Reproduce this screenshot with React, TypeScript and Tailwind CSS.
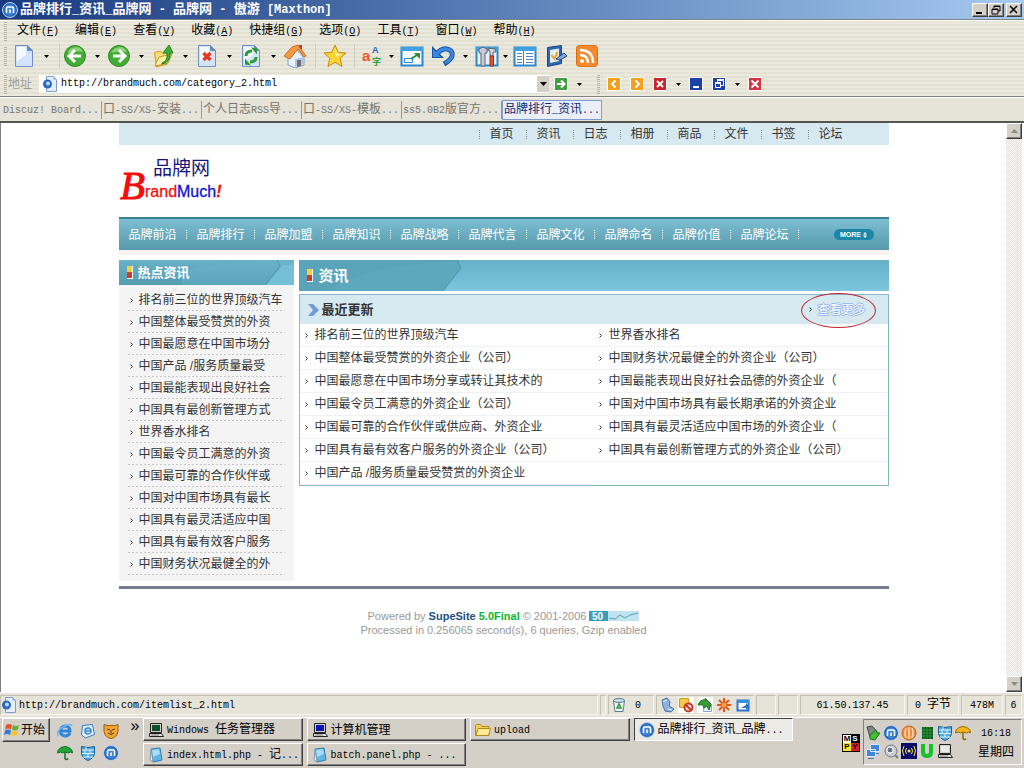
import type { ReactNode } from 'react';

const RAISED =
  'border border-t-white border-l-white border-r-[#404040] border-b-[#404040] bg-[#d4d0c8] shadow-[inset_-1px_-1px_0_#808080]';
const STRIPES = 'bg-[repeating-linear-gradient(0deg,#eae9dc_0_2px,#e3e1d3_2px_4px)]';
const DOTTED_BOTTOM =
  'bg-[linear-gradient(to_right,#9a9a9a_1px,transparent_1px)] bg-[length:4px_1px] bg-bottom bg-repeat-x';

const menus = [
  ['文件', 'F'],
  ['编辑', 'E'],
  ['查看', 'V'],
  ['收藏', 'A'],
  ['快捷组', 'G'],
  ['选项', 'O'],
  ['工具', 'T'],
  ['窗口', 'W'],
  ['帮助', 'H'],
];

const tabs = ['Discuz! Board...', '口-SS/XS-安装...', '个人日志RSS导...', '口-SS/XS-模板...', 'ss5.0B2版官方...'];

const topLinks = ['首页', '资讯', '日志', '相册', '商品', '文件', '书签', '论坛'];

const mainLinks = [
  '品牌前沿',
  '品牌排行',
  '品牌加盟',
  '品牌知识',
  '品牌战略',
  '品牌代言',
  '品牌文化',
  '品牌命名',
  '品牌价值',
  '品牌论坛',
];

const hotNews = [
  '排名前三位的世界顶级汽车',
  '中国整体最受赞赏的外资',
  '中国最愿意在中国市场分',
  '中国产品 /服务质量最受',
  '中国最能表现出良好社会',
  '中国具有最创新管理方式',
  '世界香水排名',
  '中国最令员工满意的外资',
  '中国最可靠的合作伙伴或',
  '中国对中国市场具有最长',
  '中国具有最灵活适应中国',
  '中国具有最有效客户服务',
  '中国财务状况最健全的外',
];

const latestNews = [
  '排名前三位的世界顶级汽车',
  '世界香水排名',
  '中国整体最受赞赏的外资企业（公司）',
  '中国财务状况最健全的外资企业（公司）',
  '中国最愿意在中国市场分享或转让其技术的',
  '中国最能表现出良好社会品德的外资企业（',
  '中国最令员工满意的外资企业（公司）',
  '中国对中国市场具有最长期承诺的外资企业',
  '中国最可靠的合作伙伴或供应商、外资企业',
  '中国具有最灵活适应中国市场的外资企业（',
  '中国具有最有效客户服务的外资企业（公司）',
  '中国具有最创新管理方式的外资企业（公司）',
  '中国产品 /服务质量最受赞赏的外资企业',
];

// Sets the Latin runs in a half-width face, so that two letters fill one Chinese character.
function Sys({ text, latin = 'text-[10px]' }: { text: string; latin?: string }) {
  return (
    <span className="whitespace-pre">
      {text.split(/([\x20-\x7e]+)/).map((part, i) =>
        i % 2 ? (
          <span key={i} className={`font-['Liberation_Mono',monospace] ${latin}`}>
            {part}
          </span>
        ) : (
          part
        ),
      )}
    </span>
  );
}

function Svg({ size, box = size, children }: { size: number; box?: number; children: ReactNode }) {
  return (
    <svg width={size} height={size} viewBox={`0 0 ${box} ${box}`} className="shrink-0" aria-hidden="true">
      {children}
    </svg>
  );
}

function Caret({ narrow = false }: { narrow?: boolean }) {
  return (
    <button className={`flex justify-center ${narrow ? 'w-3' : 'w-5'}`} aria-label="展开">
      <svg width="5" height="3" viewBox="0 0 5 3">
        <path d="M0 0h5L2.5 3z" fill="#000" />
      </svg>
    </button>
  );
}

function Grip() {
  return (
    <span className="h-5 w-[3px] shrink-0 bg-[repeating-linear-gradient(0deg,#b5b3a6_0_1px,transparent_1px_2px)]" />
  );
}

function ToolButton({ label, className = '', children }: { label: string; className?: string; children: ReactNode }) {
  return (
    <button aria-label={label} className={`flex w-6 shrink-0 justify-center ${className}`}>
      <Svg size={24}>{children}</Svg>
    </button>
  );
}

function Divider({ className }: { className: string }) {
  return (
    <span className={`flex justify-center ${className}`}>
      <span className="h-6 w-px bg-[#cfcdbf]" />
    </span>
  );
}

function Sheet() {
  return (
    <>
      <path d="M3.500 1.500h12l5 5v16h-17z" fill="#d3e3fa" stroke="#6f8fc4" />
      <path d="M5 3h9v8l-9 6z" fill="#f4f8ff" />
      <path d="M15.500 1.500v5h5z" fill="#5f86c9" stroke="#6f8fc4" />
    </>
  );
}

function MaxthonIcon({ size = 16 }: { size?: number }) {
  return (
    <Svg size={size} box={16}>
      <circle cx="8" cy="8" r="7.500" fill="#2c66b8" stroke="#b9d3f2" />
      <circle cx="8" cy="8" r="5.500" fill="#3f83d4" />
      <path d="M4.500 11V6.500q0-1.500 1.500-1.500h4q1.500 0 1.500 1.500V11M8 7.500V11" fill="none" stroke="#fff" strokeWidth="1.500" />
    </Svg>
  );
}

function PageIcon() {
  return (
    <Svg size={16}>
      <path d="M4.500.5h7l3 3v12h-10z" fill="#e4eefc" stroke="#7d9cd0" />
      <path d="M11.500.5v3h3z" fill="#86a7dd" />
      <circle cx="5.500" cy="8" r="4.500" fill="#2e6bbd" />
      <circle cx="6" cy="7.500" r="2" fill="#bcd9f7" />
    </Svg>
  );
}

function Shield({ size = 16 }: { size?: number }) {
  return (
    <Svg size={size} box={16}>
      <path d="M1.500 1.500q6.500 2 13 0v7q-1 5-6.500 7-5.500-2-6.500-7z" fill="#52a9dc" stroke="#175e96" />
      <path d="M2 5h12M2 8.500h12M3 12h10M6 2v3M10 5v3.500M5 5v3.500M8 8.500V12" stroke="#dff2ff" />
    </Svg>
  );
}

function Umbrella({ fill, stroke }: { fill: string; stroke: string }) {
  return (
    <Svg size={16}>
      <path d="M.5 8q0-5.500 7.500-6.500Q15.500 2.500 15.500 8l-2-1-2 1L8 7 5.500 8l-2-1z" fill={fill} stroke={stroke} />
      <path d="M8 7v6.500q1.500 2 3 0" fill="none" stroke={stroke} strokeWidth="1.500" />
    </Svg>
  );
}

function Computer({ screen = '#0b16b8' }: { screen?: string }) {
  return (
    <Svg size={16}>
      <path d="M2.500 1.500h11v9h-11z" fill="#d4d0c8" stroke="#222" />
      <path d="M4 3h8v6H4z" fill={screen} />
      <path d="M1.500 11.500h12l2 3h-14z" fill="#e8e5dd" stroke="#222" />
      <path d="M3 13h8" stroke="#777" />
    </Svg>
  );
}

function Notepad() {
  return (
    <Svg size={16}>
      <path d="M3 2l9-1 2 12-9 2z" fill="#5db5e8" stroke="#2b7fb8" />
      <path d="M4 3l7-1 1 5-7 3z" fill="#a6dcf7" />
      <path d="M3 2l2 13-3-2z" fill="#e7f4fb" stroke="#89a" />
    </Svg>
  );
}

function Toolbar() {
  return (
    <div className="flex h-8 items-center pl-1">
      <Grip />
      <ToolButton label="新建" className="ml-[5px]">
        <Sheet />
      </ToolButton>
      <Caret />
      <Divider className="w-[7px]" />
      <ToolButton label="后退">
        <circle cx="12" cy="12" r="10.500" fill="#43ac35" stroke="#2b8a25" />
        <path d="M4 9q3-6 9-6 5 0 7 5-7-2-16 1z" fill="#8ad276" />
        <path d="M12 6l-6 6 6 6M6.500 12H18" fill="none" stroke="#fff" strokeWidth="3" />
      </ToolButton>
      <Caret />
      <ToolButton label="前进">
        <circle cx="12" cy="12" r="10.500" fill="#43ac35" stroke="#2b8a25" />
        <path d="M4 9q3-6 9-6 5 0 7 5-7-2-16 1z" fill="#8ad276" />
        <path d="M12 6l6 6-6 6M17.500 12H6" fill="none" stroke="#fff" strokeWidth="3" />
      </ToolButton>
      <Caret />
      <ToolButton label="向上">
        <path d="M3.500 8.500l6-1.500 2 2 8-1-3 12-11 3z" fill="#f8dd78" stroke="#c79a2a" />
        <path d="M4 22l4-9 13-3-4 9z" fill="#fff0a8" stroke="#c79a2a" />
        <path d="M11 19q6-2 5-10h-4l6-8 4 8h-3q1 9-8 11z" fill="#3fae35" stroke="#23801f" />
      </ToolButton>
      <Caret />
      <ToolButton label="停止">
        <Sheet />
        <path d="M8.500 9l7 7M15.500 9l-7 7" stroke="#e33a22" strokeWidth="3.500" />
      </ToolButton>
      <Caret />
      <ToolButton label="刷新">
        <Sheet />
        <path d="M7 12q0-5 6-5" fill="none" stroke="#2d9a34" strokeWidth="3" />
        <path d="M12 3.500l6 1v6z" fill="#2d9a34" />
        <path d="M17 13q0 5-6 5" fill="none" stroke="#2d9a34" strokeWidth="3" />
        <path d="M12 21.500l-6-1v-6z" fill="#2d9a34" />
      </ToolButton>
      <Caret />
      <ToolButton label="主页">
        <path d="M5 11l9-5 7 8v7l-9 3-7-3z" fill="#e9f1fc" stroke="#7c9fd0" />
        <path d="M12 15v8l9-3v-7z" fill="#a9c8ee" />
        <path d="M1 12L9 3l6-2 8 11-2 1-6-8-8 10z" fill="#f39a45" stroke="#cc6f22" />
        <path d="M16 1h3v5l-3-3z" fill="#d23b25" />
        <path d="M14 16h4v6l-4 1z" fill="#7a6a68" />
      </ToolButton>
      <Divider className="w-4" />
      <ToolButton label="收藏">
        <path
          d="M12 1l3.300 7.300 7.700.7-5.800 5.200 1.800 8.300-7-4.300-7 4.300 1.800-8.300L1 9l7.700-.7z"
          fill="#fbd335"
          stroke="#c48d14"
        />
        <path d="M12 4l2 5.500 5 .5-6 3z" fill="#fff3a0" />
      </ToolButton>
      <Divider className="w-[14px]" />
      <ToolButton label="翻译">
        <text x="1" y="17" fontSize="15" fontWeight="700" fill="#e8562a" fontFamily="Liberation Sans">
          a
        </text>
        <text x="11" y="9" fontSize="9" fontWeight="700" fill="#2465c4" fontFamily="Liberation Sans">
          A
        </text>
        <text x="11" y="21" fontSize="9" fontWeight="700" fill="#2d9a34" fontFamily="Noto Sans CJK SC">
          字
        </text>
      </ToolButton>
      <Caret narrow />
      <ToolButton label="新窗口" className="ml-[3px]">
        <path d="M1.500 3.500h21v18h-21z" fill="#f4faff" stroke="#2b87cf" strokeWidth="2" />
        <path d="M1 3h22v4H1z" fill="#3fa0e4" />
        <path d="M4.500 14.500h8v4h-8z" fill="#fff" stroke="#2b87cf" />
        <path d="M11 15l6-4" stroke="#2d8a34" strokeWidth="2" />
        <path d="M14 9h6v6z" fill="#2d8a34" />
      </ToolButton>
      <ToolButton label="撤销" className="ml-[7px]">
        <path d="M5 11q5-7 11-6 6 1 5 7-1 4-8 8" fill="none" stroke="#1c55a8" strokeWidth="5" />
        <path d="M1 2v12h12z" fill="#1c55a8" />
        <path d="M5 11q5-7 11-6 6 1 5 7-1 4-7 7" fill="none" stroke="#3a8ae0" strokeWidth="3" />
        <path d="M2 5v8h8z" fill="#3a8ae0" />
      </ToolButton>
      <Caret />
      <ToolButton label="工具">
        <path d="M1.500 3.500h21v18h-21z" fill="#e6f2fd" stroke="#2b87cf" strokeWidth="2" />
        <path d="M1 3h22v4H1z" fill="#3fa0e4" />
        <path d="M4 5l4-2 4 2v4h-2v13H6V9H4z" fill="#c9cdd4" stroke="#5a6470" />
        <path d="M13 4l7 1 1 3h-3v4h-3V8z" fill="#d6dae0" stroke="#5a6470" />
        <path d="M15 12h3.500v10H15z" fill="#e0532b" stroke="#a03010" />
      </ToolButton>
      <Caret narrow />
      <ToolButton label="侧边栏" className="ml-[2px]">
        <path d="M1.500 3.500h21v18h-21z" fill="#fff" stroke="#2b87cf" strokeWidth="2" />
        <path d="M1 3h22v4H1z" fill="#3fa0e4" />
        <path d="M10.500 7v14" stroke="#2b87cf" />
        <path d="M4 9.500h5M4 12.500h5M4 15.500h5M4 18.500h5M13 9.500h7M13 12.500h7M13 15.500h7M13 18.500h7" stroke="#4f82c4" />
      </ToolButton>
      <ToolButton label="表单" className="ml-[7px]">
        <path d="M3.500 3.500l14-2v18l-14 3z" fill="#2e67b4" stroke="#1b4583" />
        <path d="M6 6l9-1.500V17L6 19z" fill="#e5effb" />
        <path d="M7.500 11l3 4 3-7" fill="none" stroke="#f0a030" strokeWidth="2" />
        <path d="M12 15l8-6 3 3-7 4z" fill="#86a9dc" stroke="#1b4583" />
      </ToolButton>
      <ToolButton label="RSS" className="ml-[7px]">
        <rect x="1.500" y="1.500" width="21" height="21" rx="3" fill="#f58a2c" stroke="#dc6e12" />
        <circle cx="7" cy="17" r="2" fill="#fff" />
        <path d="M5 11q8 0 8 8M5 6q13 0 13 13" fill="none" stroke="#fff" strokeWidth="2.500" />
      </ToolButton>
    </div>
  );
}

function SmallButton({
  label,
  color,
  d,
  thin = false,
  className = '',
}: {
  label: string;
  color: string;
  d: string;
  thin?: boolean;
  className?: string;
}) {
  return (
    <button aria-label={label} className={className}>
      <Svg size={16}>
        <rect x="1.500" y="1.500" width="13" height="13" fill={color} stroke="#fff" />
        <path d={d} fill="none" stroke="#fff" strokeWidth={thin ? 1 : 2} />
      </Svg>
    </button>
  );
}

function AddressBar() {
  return (
    <div className="flex h-6 items-center pl-1">
      <Grip />
      <label htmlFor="address" className="ml-px text-[#a09e94]">
        地址
      </label>
      <div className="ml-[7px] flex h-[18px] w-1/2 items-center bg-white pl-[3px]">
        <PageIcon />
        <input
          id="address"
          defaultValue="http://brandmuch.com/category_2.html"
          className="ml-[3px] min-w-0 flex-1 bg-transparent font-['Liberation_Mono',monospace] text-[10px] outline-none"
        />
        <button aria-label="历史" className="flex h-4 w-3 items-center justify-center bg-[#d4d0c8]">
          <svg width="7" height="4" viewBox="0 0 7 4">
            <path d="M0 0h7L3.500 4z" />
          </svg>
        </button>
      </div>
      <SmallButton label="转到" color="#3f9e41" d="M4 8h7M8 4.500L11.500 8 8 11.500" className="ml-1" />
      <Caret />
      <span className="w-2" />
      <Grip />
      <SmallButton label="上一个" color="#f3a01c" d="M9.500 4.500L6 8l3.500 3.500" className="ml-[6px]" />
      <SmallButton label="下一个" color="#f3a01c" d="M6.500 4.500L10 8l-3.500 3.500" className="ml-[7px]" />
      <SmallButton label="关闭标签" color="#c8242c" d="M5 5l6 6M11 5l-6 6" className="ml-[7px]" />
      <Caret />
      <SmallButton label="最小化标签" color="#1d3fa8" d="M5 11h6" />
      <SmallButton
        label="还原标签"
        color="#1d3fa8"
        d="M6.500 7V4.500h6v5H10M6 3.500h7M4.500 7.500h5v4h-5zM4 6.500h6"
        thin
        className="ml-[7px]"
      />
      <Caret />
      <SmallButton label="关闭" color="#d8303c" d="M4.500 4.500l7 7M11.500 4.500l-7 7" />
    </div>
  );
}

function Bullet() {
  return (
    <svg width="4" height="5" viewBox="0 0 4 5" className="shrink-0">
      <path d="M.5.5l2 2-2 2" fill="none" stroke="#333" />
    </svg>
  );
}

function Flag() {
  return (
    <span className="h-[13px] w-[6px] border-r border-b border-white bg-linear-to-b from-[#f7d13a] from-45% to-[#d9342b] to-55%" />
  );
}

function Logo() {
  return (
    <svg width="112" height="60" viewBox="0 0 112 60" role="img" aria-label="品牌网 BrandMuch!">
      <text
        x="1"
        y="48"
        fontSize="41"
        fontStyle="italic"
        fontFamily="Liberation Serif"
        fill="#f30d0d"
        stroke="#f30d0d"
        strokeWidth="1"
      >
        B
      </text>
      <text x="34" y="24" fontSize="19" fontFamily="Noto Sans CJK SC" fill="#15157a">
        品牌网
      </text>
      <text x="26" y="46" fontSize="16" fontFamily="Liberation Sans" fill="#f30d0d" stroke="#f30d0d" strokeWidth="0.300">
        rand
        <tspan fill="#1010d8" stroke="#1010d8">
          Much
        </tspan>
        <tspan fontStyle="italic" fontWeight="700">
          !
        </tspan>
      </text>
    </svg>
  );
}

function WebPage() {
  return (
    <div className="mx-auto w-full max-w-[770px] text-[#333]">
      <nav className="flex h-[22px] items-center justify-end bg-[#d6e9f0] pr-[34px]">
        {topLinks.map((name) => (
          <span key={name} className="flex w-[47px] items-center">
            <span className="mr-[10px] h-[9px] border-l border-dotted border-[#7d93a0]" />
            <a href="#">{name}</a>
          </span>
        ))}
      </nav>

      <div className="flex h-[72px] items-center">
        <Logo />
      </div>

      <nav className="flex h-[33px] items-center border-t-2 border-[#3a8294] bg-linear-to-b from-[#7dbed3] to-[#579aab] pl-[10px] text-white">
        {mainLinks.map((name) => (
          <span key={name} className="flex w-[68px] items-center">
            <a href="#">{name}</a>
            <span className="ml-[9px] h-[9px] border-l border-dotted border-white" />
          </span>
        ))}
        <button className="mr-[15px] ml-auto flex h-[11px] w-10 items-center justify-center gap-[2px] rounded-full bg-[#1d86a7] font-['Liberation_Sans',sans-serif] text-[7px] leading-none font-bold">
          MORE
          <svg width="4" height="6" viewBox="0 0 4 6">
            <path d="M0 2.500h4L2 0zM0 3.500h4L2 6z" fill="#fff" />
          </svg>
        </button>
      </nav>
      <div className="mb-[5px] h-[5px] bg-[#f6f2ef]" />

      <div className="flex items-start gap-[5px]">
        <aside className="w-[175px] shrink-0 bg-[#f4f4f4]">
          <h2 className="relative flex h-[25px] items-center overflow-hidden bg-linear-to-b from-[#69b0c8] to-[#569db2] pl-2 text-[13px] font-bold text-white">
            <svg className="absolute inset-y-0 right-0" width="112" height="25" viewBox="0 0 112 25">
              <path d="M0 12Q30 2 90 0h22v25H0z" fill="#6db8d0" opacity=".3" />
              <path d="M84 25l14-17v-8h14v25z" fill="#69b4cb" />
              <path d="M84 25l17-20 11 0v20z" fill="#7cc4db" opacity=".7" />
              <path d="M95 0l3 6-14 18" fill="none" stroke="#5699ad" />
            </svg>
            <Flag />
            <span className="relative ml-[5px]">热点资讯</span>
          </h2>
          <ul className="px-[9px] pt-1 pb-1.5">
            {hotNews.map((title) => (
              <li key={title} className={`flex h-[22px] items-center pl-[2px] ${DOTTED_BOTTOM}`}>
                <Bullet />
                <a href="#" className="ml-[5px] whitespace-nowrap">
                  {title}
                </a>
              </li>
            ))}
          </ul>
        </aside>

        <main className="min-w-0 flex-1">
          <h1 className="relative flex h-[31px] items-center bg-linear-to-b from-[#66b0ca] to-[#7cc5dd] pl-2 text-[15px] font-bold text-white">
            <svg className="absolute inset-y-0 left-0" width="163" height="31" viewBox="0 0 163 31">
              <path d="M0 0h158l4 8-18 23H0z" fill="#5ea8be" />
              <path d="M30 31Q60 6 158 1v-1H0v31z" fill="#549bb0" opacity=".3" />
              <path d="M158 0l4 8-18 23" fill="none" stroke="#5193a6" />
            </svg>
            <span className="relative flex items-center gap-[6px]">
              <Flag />
              资讯
            </span>
          </h1>

          <section className="mt-[3px] border border-[#86b7c6]">
            <div className="relative flex h-[29px] items-center bg-[#d6e9f0] pl-2">
              <svg width="11" height="12" viewBox="0 0 11 12">
                <path d="M0 0h5l6 6-6 6H0l5-6z" fill="#6f9bdc" />
              </svg>
              <h2 className="ml-[3px] text-[13px] font-bold">最近更新</h2>
              <a
                href="#"
                className="mr-[22px] ml-auto flex items-center gap-1 text-white [text-shadow:1px_0_#92b4ea,-1px_0_#92b4ea,0_1px_#92b4ea,0_-1px_#92b4ea]"
              >
                <Bullet />
                查看更多
              </a>
              <span className="absolute -top-[2px] right-3 h-[35px] w-[75px] rounded-[50%] border border-[#c22736]" />
            </div>
            <ul className="grid grid-cols-2">
              {latestNews.map((title) => (
                <li key={title} className="flex h-[23px] items-center border-b border-[#f1f1f1] pl-[5px]">
                  <Bullet />
                  <a href="#" className="ml-[6px] whitespace-nowrap">
                    {title}
                  </a>
                </li>
              ))}
            </ul>
          </section>
        </main>
      </div>

      <footer className="mt-[5px] border-t-[3px] border-[#767a8c] pt-5 text-center font-['Liberation_Sans',sans-serif] text-[11px] leading-[14px] text-[#999]">
        <p className="flex items-center justify-center gap-[3px]">
          Powered by
          <a href="#" className="font-bold text-[#23507f]">
            SupeSite <span className="text-[#0cb82e]">5.0Final</span>
          </a>
          © 2001-2006
          <svg width="50" height="10" viewBox="0 0 50 10">
            <path d="M0 0h50v10H0z" fill="#bfe3ef" />
            <path d="M0 0h19v10H0z" fill="#3c9dbb" />
            <text x="3" y="9" fontSize="10" fontWeight="700" fill="#fff">
              50
            </text>
            <path d="M20 7l6 1 5-4 5 3 5-3 8-2" fill="none" stroke="#5aa0b8" />
          </svg>
        </p>
        <p>Processed in 0.256065 second(s), 6 queries, Gzip enabled</p>
      </footer>
    </div>
  );
}

function ScrollArrow({ d, label }: { d: string; label: string }) {
  return (
    <button aria-label={label} className={`flex h-4 w-4 items-center justify-center ${RAISED}`}>
      <svg width="7" height="4" viewBox="0 0 7 4">
        <path d={d} fill="#8a8a86" />
      </svg>
    </button>
  );
}

function Panel({ className, children }: { className: string; children?: ReactNode }) {
  return (
    <div
      className={`flex h-5 shrink-0 items-center border border-t-[#c3c0b3] border-r-[#f6f5ee] border-b-[#f6f5ee] border-l-[#c3c0b3] ${className}`}
    >
      {children}
    </div>
  );
}

function StatusBar() {
  return (
    <div className="flex h-[25px] items-center gap-[2px] border-t border-white bg-[#e6e3d8] pr-[2px]">
      <Panel className="min-w-0 flex-1 gap-[2px]">
        <PageIcon />
        <Sys text="http://brandmuch.com/itemlist_2.html" />
      </Panel>
      <Panel className="w-[6px]" />
      <Panel className="w-[46px] pl-[2px]">
        <Svg size={16}>
          <path d="M2.500 3.500h11l-1.500 11H4z" fill="#eef4f8" stroke="#5d7a90" />
          <ellipse cx="8" cy="3.500" rx="5.500" ry="2" fill="#c9dbe8" stroke="#5d7a90" />
          <path d="M6 11l2-4 2 4z" fill="none" stroke="#2d9a34" strokeWidth="1.500" />
        </Svg>
        <span className="ml-2">
          <Sys text="0" />
        </span>
      </Panel>
      <Panel className="w-[98px] gap-[3px] pl-[2px]">
        <Svg size={16}>
          <path d="M3 3l5-2 3 4-1 4 5 3-3 3-6-1-2-5z" fill="#8bb3e0" stroke="#4a70a8" />
          <path d="M4 5l4-2M9 12l4 1" stroke="#e9f3ff" />
        </Svg>
        <Svg size={16}>
          <path d="M0 0h16v16H0z" fill="#fff" />
          <path d="M1.500 1.500h9v9h-9z" fill="#f9c944" stroke="#d99a1c" />
          <circle cx="10.500" cy="10.500" r="4" fill="#fbe3dc" stroke="#c5352a" strokeWidth="2" />
          <path d="M8 8l5 5" stroke="#c5352a" strokeWidth="2" />
        </Svg>
        <Svg size={16}>
          <path d="M0 0h16v16H0z" fill="#fff" />
          <path d="M6.500 7.500h8v7h-8z" fill="#e4eefc" stroke="#8da6cc" />
          <path d="M1 8q2-6 8-5l-1-2 6 6-2 6-2-4-3 2q0-4-6-3z" fill="#3a9a38" stroke="#1d6e1f" />
        </Svg>
        <Svg size={16}>
          <path d="M8 1v14M1 8h14M3 3l10 10M13 3L3 13" stroke="#e2571c" strokeWidth="2" />
          <circle cx="8" cy="8" r="3" fill="#f9a33c" stroke="#e2571c" />
        </Svg>
        <Svg size={16}>
          <path d="M2.500 3.500h11v10h-11z" fill="#fff" stroke="#2b75c4" strokeWidth="2" />
          <path d="M2 3h12v3H2z" fill="#3a8fdc" />
          <path d="M6 11l5-3V6l4 4-4 3v-2z" fill="#2b75c4" />
        </Svg>
      </Panel>
      <Panel className="w-5" />
      <Panel className="w-5" />
      <Panel className="w-[105px] justify-center">
        <Sys text="61.50.137.45" />
      </Panel>
      <Panel className="w-[52px] justify-center">
        <Sys text="0 字节" />
      </Panel>
      <Panel className="w-[42px] justify-center">
        <Sys text="478M" />
      </Panel>
      <Panel className="w-[17px] justify-center">
        <Sys text="6" />
      </Panel>
    </div>
  );
}

function Task({ title, icon }: { title: string; icon: ReactNode }) {
  return (
    <button className={`flex h-[23px] min-w-0 items-center gap-[3px] pl-1 ${RAISED}`}>
      {icon}
      <Sys text={title} />
    </button>
  );
}

function Taskbar() {
  return (
    <div className="flex h-[51px] border-t border-white bg-[#d4d0c8] pr-[2px] pl-[2px]">
      <button className={`flex h-6 w-12 shrink-0 items-center gap-px pl-px ${RAISED}`}>
        <Svg size={16}>
          <path d="M2 3q3-2 6 0L7 7.500q-3-2-6 0z" fill="#e5532a" />
          <path d="M9 3q3 2 6 0l-1 4.500q-3 2-6 0z" fill="#5cb531" />
          <path d="M1 8.500q3-2 6 0L6 13q-3-2-6 0z" fill="#3a78d8" />
          <path d="M8 8.500q3 2 6 0L13 13q-3 2-6 0z" fill="#f8c52c" />
        </Svg>
        开始
      </button>

      <div className="ml-[7px] grid h-[46px] shrink-0 grid-cols-3 place-items-center gap-x-[7px] gap-y-px pt-[2px]">
        <Svg size={16}>
          <path d="M13 10q-1.500 3-5 3-4.500-.5-4.500-5T8 3q5 .5 5 5H4" fill="none" stroke="#2f86d6" strokeWidth="3" />
          <path d="M1 13Q-1 7 8 3q6-3 7 0" fill="none" stroke="#69b3f0" strokeWidth="1.500" />
        </Svg>
        <Svg size={16}>
          <path d="M2.500 2.500l10-1 2 10-9 3.500-4-3z" fill="#e3effc" stroke="#3c79c4" />
          <path d="M11 9q-1 2-3 2-3 0-3-3t3-3q3 0 3 3H6" fill="none" stroke="#2f86d6" strokeWidth="1.500" />
        </Svg>
        <Svg size={16}>
          <path d="M1 1.500l3 1h8l3-1v7q-1 6-7 7-6-1-7-7z" fill="#f0a832" stroke="#9b5d10" />
          <path d="M4 6l3 1M12 6L9 7M5 10q3 3 6 0M8 7v3" stroke="#5d3304" fill="none" />
        </Svg>
        <Umbrella fill="#25a43a" stroke="#11702a" />
        <Shield />
        <MaxthonIcon />
      </div>
      <button className="ml-2 h-4 w-4 shrink-0 text-center font-['Liberation_Sans',sans-serif] text-base leading-4">»</button>

      <div className="grid max-w-[650px] min-w-0 flex-1 grid-cols-4 content-start gap-x-1 gap-y-[2px]">
        <Task title="Windows 任务管理器" icon={<Computer screen="#0d4f2a" />} />
        <Task title="计算机管理" icon={<Computer />} />
        <Task
          title="upload"
          icon={
            <Svg size={16}>
              <path d="M.5 13.500v-10l1-1h4l1.500 2h7v9z" fill="#f5cf55" stroke="#b48717" />
              <path d="M1 13.500l2-7h12.500l-2 7z" fill="#ffeb97" stroke="#b48717" />
            </Svg>
          }
        />
        <button className="flex h-[23px] min-w-0 items-center gap-[3px] border border-t-[#404040] border-r-white border-b-white border-l-[#404040] bg-[#eceae5] pl-1">
          <MaxthonIcon />
          <Sys text="品牌排行_资讯_品牌..." />
        </button>
        <Task title="index.html.php - 记..." icon={<Notepad />} />
        <Task title="batch.panel.php - ..." icon={<Notepad />} />
      </div>

      <div className="ml-auto grid h-4 w-4 shrink-0 grid-cols-2 self-center text-center font-['Liberation_Sans',sans-serif] text-[8px] leading-2 font-bold outline outline-black">
        <span className="bg-white">M</span>
        <span className="bg-black text-white">S</span>
        <span className="bg-[#f4ea2c]">P</span>
        <span className="bg-[#d5202a]">Y</span>
      </div>

      <div className="mt-px ml-1 flex h-[46px] w-[159px] shrink-0 items-center border border-t-[#808080] border-r-white border-b-white border-l-[#808080] pl-px">
        <div className="grid grid-cols-6 gap-x-[2px] gap-y-[2px]">
          <Svg size={16}>
            <path d="M2 2l5-1 7 8-4 5-5-2z" fill="#7c8a86" stroke="#444" />
            <path d="M5 10l6-5 1 3h3l-5 7-5-1z" fill="#46b83c" stroke="#1d7a1d" />
          </Svg>
          <MaxthonIcon />
          <Svg size={16}>
            <circle cx="8" cy="8" r="7" fill="#f28a3c" stroke="#c85d1a" />
            <path d="M5 3q-2 5 0 10M8 2v12M11 3q2 5 0 10" fill="none" stroke="#fbe0c4" strokeWidth="1.500" />
          </Svg>
          <Svg size={16}>
            <path d="M3 2h11v12H3z" fill="#0a5a1c" />
            <path d="M5 2v12M8 2v12M11 2v12M3 5h11M3 8h11M3 11h11" stroke="#2b8f3a" />
          </Svg>
          <Shield />
          <Umbrella fill="#f4b81e" stroke="#94690a" />
          <Svg size={16}>
            <path d="M5.500 1.500h9v7h-9zM1.500 6.500h9v7h-9z" fill="#3f86dc" stroke="#dbe8f6" />
            <path d="M3 15.500h6M11 10.500h3" stroke="#4a70a8" />
          </Svg>
          <Svg size={16}>
            <circle cx="8" cy="8" r="6" fill="#c9ccd2" stroke="#777b85" />
            <circle cx="7" cy="7" r="3" fill="#6b7180" stroke="#fff" />
            <path d="M12 12l3 3" stroke="#777b85" strokeWidth="2" />
          </Svg>
          <Svg size={16}>
            <path d="M0 0h16v16H0z" fill="#0a0a6e" />
            <circle cx="8" cy="8" r="1.500" fill="#f5ee3a" />
            <path d="M5.500 5q-2 3 0 6M10.500 5q2 3 0 6M3 3q-3 5 0 10M13 3q3 5 0 10" fill="none" stroke="#f5ee3a" />
          </Svg>
          <Svg size={16}>
            <path d="M4 1v8q0 4 4 4t4-4V1" fill="none" stroke="#16c22c" strokeWidth="4" />
          </Svg>
          <Computer screen="#e8e8e4" />
        </div>
        <div className="flex flex-1 flex-col items-center leading-[18px]">
          <Sys text="16:18" />
          <span>星期四</span>
        </div>
      </div>
    </div>
  );
}

export default function App() {
  return (
    <div className="flex min-h-screen flex-col bg-[#d4d0c8] font-['Liberation_Sans','Noto_Sans_CJK_SC',sans-serif] text-xs leading-4 text-black">
      <header>
        <div className="flex h-[19px] items-center bg-linear-to-r from-[#1a3a80] to-[#a6caf0] pr-[2px] pl-[2px] text-white">
          <MaxthonIcon />
          <h1 className="ml-[2px] text-[13px] font-bold">
            <Sys text="品牌排行_资讯_品牌网 - 品牌网 - 傲游 [Maxthon]" latin="text-xs" />
          </h1>
          <div className="ml-auto flex text-black">
            <button aria-label="最小化" className={`h-[14px] w-4 ${RAISED}`}>
              <Svg size={12}>
                <path d="M3 9h6" stroke="#000" strokeWidth="2" />
              </Svg>
            </button>
            <button aria-label="还原" className={`h-[14px] w-4 ${RAISED}`}>
              <Svg size={12}>
                <path d="M5 4V2h6v5H9M3 5h6v5H3zM5 2.500h6M3 5.500h6" fill="none" stroke="#000" />
              </Svg>
            </button>
            <button aria-label="关闭" className={`ml-[2px] h-[14px] w-4 ${RAISED}`}>
              <Svg size={12}>
                <path d="M3 2l7 7M10 2l-7 7" stroke="#000" strokeWidth="1.500" />
              </Svg>
            </button>
          </div>
        </div>

        <div className={`border-t border-b border-t-[#808080] border-b-[#808080] ${STRIPES}`}>
          <div className="flex h-5 items-center border-t border-white pl-1">
            <Grip />
            <nav className="ml-[10px] flex gap-4">
              {menus.map(([name, key]) => (
                <button key={key} className="whitespace-nowrap">
                  {name}
                  <span className="font-['Liberation_Mono',monospace] text-[10px]">
                    (<u>{key}</u>)
                  </span>
                </button>
              ))}
            </nav>
          </div>
          <Toolbar />
          <AddressBar />
        </div>

        <div className="flex h-[26px] items-center border-t border-b-2 border-t-white border-b-[#55564e] bg-[#e6e3d8] pt-px pl-[2px]">
          {tabs.map((title) => (
            <button
              key={title}
              className="h-[18px] w-[100px] overflow-hidden border-r border-[#9b998c] pl-px text-left text-[#77756c]"
            >
              <Sys text={title} />
            </button>
          ))}
          <button className="h-5 w-[100px] overflow-hidden border border-[#7f9bd0] bg-[#e9eef8] pl-px text-left text-[#0f2c72]">
            <Sys text="品牌排行_资讯..." />
          </button>
        </div>
      </header>

      <div className="flex flex-1 border-l border-[#808080] bg-white pr-[2px]">
        <div className="min-w-0 flex-1">
          <WebPage />
        </div>
        <div className="flex w-4 flex-col justify-between bg-[repeating-conic-gradient(#fff_0_25%,#e0ddd6_0_50%)] bg-[length:2px_2px]">
          <ScrollArrow label="向上滚动" d="M0 4h7L3.500 0z" />
          <ScrollArrow label="向下滚动" d="M0 0h7L3.500 4z" />
        </div>
      </div>

      <StatusBar />
      <Taskbar />
    </div>
  );
}
